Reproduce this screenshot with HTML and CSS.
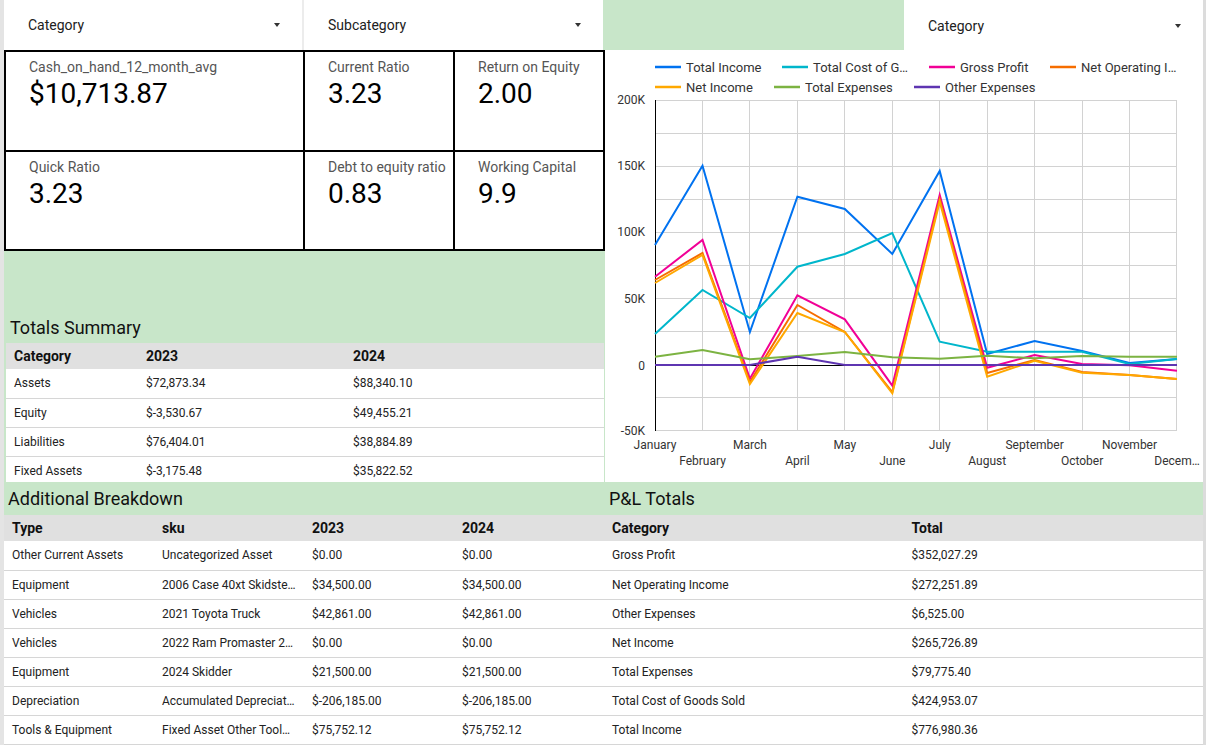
FILE: index.html
```html
<!DOCTYPE html>
<html lang="en">
<head>
<meta charset="utf-8">
<title>Financial Dashboard</title>
<link rel="stylesheet" href="styles.css">
</head>
<body>
<div class="page">
  <div class="top">
    <div class="left-col">
      <div class="filters">
        <div class="dropdown first">Category<span class="caret"></span></div>
        <div class="dropdown">Subcategory<span class="caret"></span></div>
      </div>
      <div class="kpis">
        <div class="kpi"><div class="kpi-label">Cash_on_hand_12_month_avg</div><div class="kpi-value">$10,713.87</div></div>
        <div class="kpi"><div class="kpi-label">Current Ratio</div><div class="kpi-value">3.23</div></div>
        <div class="kpi"><div class="kpi-label">Return on Equity</div><div class="kpi-value">2.00</div></div>
        <div class="kpi"><div class="kpi-label">Quick Ratio</div><div class="kpi-value">3.23</div></div>
        <div class="kpi"><div class="kpi-label">Debt to equity ratio</div><div class="kpi-value">0.83</div></div>
        <div class="kpi"><div class="kpi-label">Working Capital</div><div class="kpi-value">9.9</div></div>
      </div>
      <div class="spacer"></div>
      <div class="section-title summary-title">Totals Summary</div>
      <div class="table-wrap summary-wrap">
        <table class="tbl summary">
          <thead><tr><th class="c1">Category</th><th class="c2">2023</th><th>2024</th></tr></thead>
          <tbody>
            <tr><td>Assets</td><td>$72,873.34</td><td>$88,340.10</td></tr>
            <tr><td>Equity</td><td>$-3,530.67</td><td>$49,455.21</td></tr>
            <tr><td>Liabilities</td><td>$76,404.01</td><td>$38,884.89</td></tr>
            <tr><td>Fixed Assets</td><td>$-3,175.48</td><td>$35,822.52</td></tr>
          </tbody>
        </table>
      </div>
    </div>
    <div class="right-col">
      <div class="filters-right">
        <div class="dropdown right">Category<span class="caret"></span></div>
      </div>
      <div class="chart">
        <svg width="598" height="432" viewBox="0 0 598 432" xmlns="http://www.w3.org/2000/svg">
          <g class="legend" font-size="13" fill="#333">
            <line x1="50" y1="17" x2="76" y2="17" stroke="#0072f0" stroke-width="2.5"/>
            <text x="81" y="21.6">Total Income</text>
            <line x1="177" y1="17" x2="203" y2="17" stroke="#00b6cb" stroke-width="2.5"/>
            <text x="208" y="21.6">Total Cost of G…</text>
            <line x1="324" y1="17" x2="350" y2="17" stroke="#f10096" stroke-width="2.5"/>
            <text x="355" y="21.6">Gross Profit</text>
            <line x1="445" y1="17" x2="471" y2="17" stroke="#f66d00" stroke-width="2.5"/>
            <text x="476" y="21.6">Net Operating I…</text>
            <line x1="50" y1="37" x2="76" y2="37" stroke="#ffa800" stroke-width="2.5"/>
            <text x="81" y="41.6">Net Income</text>
            <line x1="169" y1="37" x2="195" y2="37" stroke="#7cb342" stroke-width="2.5"/>
            <text x="200" y="41.6">Total Expenses</text>
            <line x1="309" y1="37" x2="335" y2="37" stroke="#5e35b1" stroke-width="2.5"/>
            <text x="340" y="41.6">Other Expenses</text>
          </g>
          <g class="grid" stroke="#d2d2d2" stroke-width="1">
            <line x1="50" y1="50.5" x2="572" y2="50.5"/>
            <line x1="50" y1="83.5" x2="572" y2="83.5"/>
            <line x1="50" y1="116.5" x2="572" y2="116.5"/>
            <line x1="50" y1="149.5" x2="572" y2="149.5"/>
            <line x1="50" y1="182.5" x2="572" y2="182.5"/>
            <line x1="50" y1="215.5" x2="572" y2="215.5"/>
            <line x1="50" y1="248.5" x2="572" y2="248.5"/>
            <line x1="50" y1="281.5" x2="572" y2="281.5"/>
            <line x1="50" y1="347.5" x2="572" y2="347.5"/>
            <line x1="50" y1="380.5" x2="572" y2="380.5"/>
            <line x1="97.5" y1="50" x2="97.5" y2="381"/>
            <line x1="144.5" y1="50" x2="144.5" y2="381"/>
            <line x1="192.5" y1="50" x2="192.5" y2="381"/>
            <line x1="239.5" y1="50" x2="239.5" y2="381"/>
            <line x1="287.5" y1="50" x2="287.5" y2="381"/>
            <line x1="334.5" y1="50" x2="334.5" y2="381"/>
            <line x1="382.5" y1="50" x2="382.5" y2="381"/>
            <line x1="429.5" y1="50" x2="429.5" y2="381"/>
            <line x1="477.5" y1="50" x2="477.5" y2="381"/>
            <line x1="524.5" y1="50" x2="524.5" y2="381"/>
            <line x1="571.5" y1="50" x2="571.5" y2="381"/>
          </g>
          <line x1="50" y1="315.5" x2="572" y2="315.5" stroke="#000" stroke-width="1"/>
          <line x1="50.5" y1="50" x2="50.5" y2="381" stroke="#000" stroke-width="1"/>
          <g class="ylabels" font-size="12" fill="#333" text-anchor="end">
            <text x="40" y="54">200K</text>
            <text x="40" y="120">150K</text>
            <text x="40" y="186">100K</text>
            <text x="40" y="252.5">50K</text>
            <text x="40" y="319.5">0</text>
            <text x="40" y="385">-50K</text>
          </g>
          <g class="xlabels" font-size="12" fill="#333" text-anchor="middle">
            <text x="50" y="398.5">January</text>
            <text x="97.5" y="414.5">February</text>
            <text x="145" y="398.5">March</text>
            <text x="192.4" y="414.5">April</text>
            <text x="239.8" y="398.5">May</text>
            <text x="287.3" y="414.5">June</text>
            <text x="334.7" y="398.5">July</text>
            <text x="382.2" y="414.5">August</text>
            <text x="429.6" y="398.5">September</text>
            <text x="477.1" y="414.5">October</text>
            <text x="524.5" y="398.5">November</text>
            <text x="572" y="414.5">Decem…</text>
          </g>
          <g class="series" fill="none" stroke-width="2" stroke-linejoin="miter">
            <polyline stroke="#0072f0" points="50,195 97.5,115.7 144.9,282 192.4,146.7 239.8,159 287.3,204 334.7,121 382.2,304 429.6,291 477.1,301 524.5,313 572,309"/>
            <polyline stroke="#00b6cb" points="50,284 97.5,240 144.9,268 192.4,216.7 239.8,204 287.3,183 334.7,291.7 382.2,301.7 429.6,301.7 477.1,301.7 524.5,314 572,309"/>
            <polyline stroke="#f10096" points="50,226.7 97.5,190 144.9,328.7 192.4,245.3 239.8,269.3 287.3,335.7 334.7,145 382.2,317.7 429.6,305 477.1,314 524.5,315.3 572,320.7"/>
            <polyline stroke="#f66d00" points="50,230 97.5,203 144.9,332 192.4,255 239.8,282 287.3,342 334.7,149 382.2,323 429.6,310 477.1,322 524.5,325 572,329"/>
            <polyline stroke="#ffa800" points="50,233 97.5,205 144.9,334 192.4,263 239.8,282 287.3,343.3 334.7,151.7 382.2,326.7 429.6,310.7 477.1,322.7 524.5,325 572,329"/>
            <polyline stroke="#7cb342" points="50,306.7 97.5,300 144.9,309.3 192.4,306 239.8,302 287.3,307.3 334.7,308.7 382.2,305.7 429.6,308.3 477.1,306 524.5,306.7 572,306.7"/>
            <polyline stroke="#5e35b1" points="50,315 97.5,315 144.9,315 192.4,306.7 239.8,315 287.3,315 334.7,315 382.2,315 429.6,315 477.1,315 524.5,315 572,315"/>
          </g>
        </svg>
      </div>
    </div>
  </div>
  <div class="bottom">
    <section class="panel breakdown">
      <div class="section-title">Additional Breakdown</div>
      <table class="tbl four">
        <thead><tr><th>Type</th><th>sku</th><th>2023</th><th>2024</th></tr></thead>
        <tbody>
          <tr><td>Other Current Assets</td><td>Uncategorized Asset</td><td>$0.00</td><td>$0.00</td></tr>
          <tr><td>Equipment</td><td>2006 Case 40xt Skidste…</td><td>$34,500.00</td><td>$34,500.00</td></tr>
          <tr><td>Vehicles</td><td>2021 Toyota Truck</td><td>$42,861.00</td><td>$42,861.00</td></tr>
          <tr><td>Vehicles</td><td>2022 Ram Promaster 2…</td><td>$0.00</td><td>$0.00</td></tr>
          <tr><td>Equipment</td><td>2024 Skidder</td><td>$21,500.00</td><td>$21,500.00</td></tr>
          <tr><td>Depreciation</td><td>Accumulated Depreciat…</td><td>$-206,185.00</td><td>$-206,185.00</td></tr>
          <tr><td>Tools &amp; Equipment</td><td>Fixed Asset Other Tool…</td><td>$75,752.12</td><td>$75,752.12</td></tr>
        </tbody>
      </table>
    </section>
    <section class="panel pl">
      <div class="section-title">P&amp;L Totals</div>
      <table class="tbl two">
        <thead><tr><th>Category</th><th>Total</th></tr></thead>
        <tbody>
          <tr><td>Gross Profit</td><td>$352,027.29</td></tr>
          <tr><td>Net Operating Income</td><td>$272,251.89</td></tr>
          <tr><td>Other Expenses</td><td>$6,525.00</td></tr>
          <tr><td>Net Income</td><td>$265,726.89</td></tr>
          <tr><td>Total Expenses</td><td>$79,775.40</td></tr>
          <tr><td>Total Cost of Goods Sold</td><td>$424,953.07</td></tr>
          <tr><td>Total Income</td><td>$776,980.36</td></tr>
        </tbody>
      </table>
    </section>
  </div>
</div>
</body>
</html>
```

FILE: styles.css
```css
* { box-sizing: border-box; }
html, body { margin: 0; padding: 0; }
body {
  font-family: Roboto, "Liberation Sans", Arial, sans-serif;
  color: #212121;
  background: #c8e6c9;
}
.page {
  width: 1206px;
  height: 745px;
  overflow: hidden;
  background: #c8e6c9;
  border-left: 4px solid #e4e4e4;
  border-right: 3px solid #dcdcdc;
}
.top {
  display: grid;
  grid-template-columns: 601px 598px;
  height: 482px;
}
.left-col { display: flex; flex-direction: column; }
.filters { display: flex; height: 50px; }
.dropdown {
  position: relative;
  background: #fff;
  height: 50px;
  font-size: 14px;
  line-height: 50px;
  padding-left: 24px;
  color: #212121;
}
.dropdown.first { width: 300px; border-right: 2px solid #ececec; }
.filters .dropdown:not(.first) { width: 299px; }
.caret {
  position: absolute;
  right: 22px;
  top: 23px;
  width: 0; height: 0;
  border-left: 3.5px solid transparent;
  border-right: 3.5px solid transparent;
  border-top: 4px solid #333;
}
.filters-right { display: flex; justify-content: flex-end; height: 50px; }
.dropdown.right { width: 299px; line-height: 52px; }
.dropdown.right .caret { top: 24px; right: 22px; }

.kpis {
  display: grid;
  grid-template-columns: 297px 148px 148px;
  grid-template-rows: 98px 97px;
  gap: 2px;
  padding: 2px;
  background: #000;
  height: 201px;
  width: 601px;
}
.kpi { background: #fff; padding: 7px 0 0 23px; }
.kpi-label { font-size: 14px; line-height: 16px; color: #555; white-space: nowrap; }
.kpi-value { font-size: 28px; line-height: 36px; color: #000; margin-top: 1px; }

.spacer { height: 64px; }
.section-title {
  font-size: 18px;
  color: #111;
  height: 33px;
  line-height: 33px;
  padding-left: 4px;
}
.summary-title { height: 28px; line-height: 25px; padding-left: 6px; }
.table-wrap { height: 139px; overflow: hidden; }
.summary-wrap { margin-left: 2px; width: 598px; background: #fff; }

.tbl {
  width: 100%;
  border-collapse: collapse;
  table-layout: fixed;
  background: #fff;
}
.tbl th {
  background: #e0e0e0;
  font-size: 14px;
  font-weight: 700;
  text-align: left;
  height: 26px;
  padding: 0 8px;
  color: #111;
}
.tbl td {
  font-size: 12px;
  height: 29px;
  padding: 0 8px;
  border-bottom: 1px solid #d6d6d6;
  white-space: nowrap;
  overflow: hidden;
  color: #222;
}
.summary .c1 { width: 132px; }
.summary .c2 { width: 207px; }

.chart { background: #fff; height: 432px; }
.chart svg { display: block; font-family: Roboto, "Liberation Sans", Arial, sans-serif; }

.bottom {
  display: grid;
  grid-template-columns: 600px 599px;
}
.panel .tbl th, .panel .tbl td { padding-left: 8px; }
.pl .section-title { padding-left: 5px; }
```
